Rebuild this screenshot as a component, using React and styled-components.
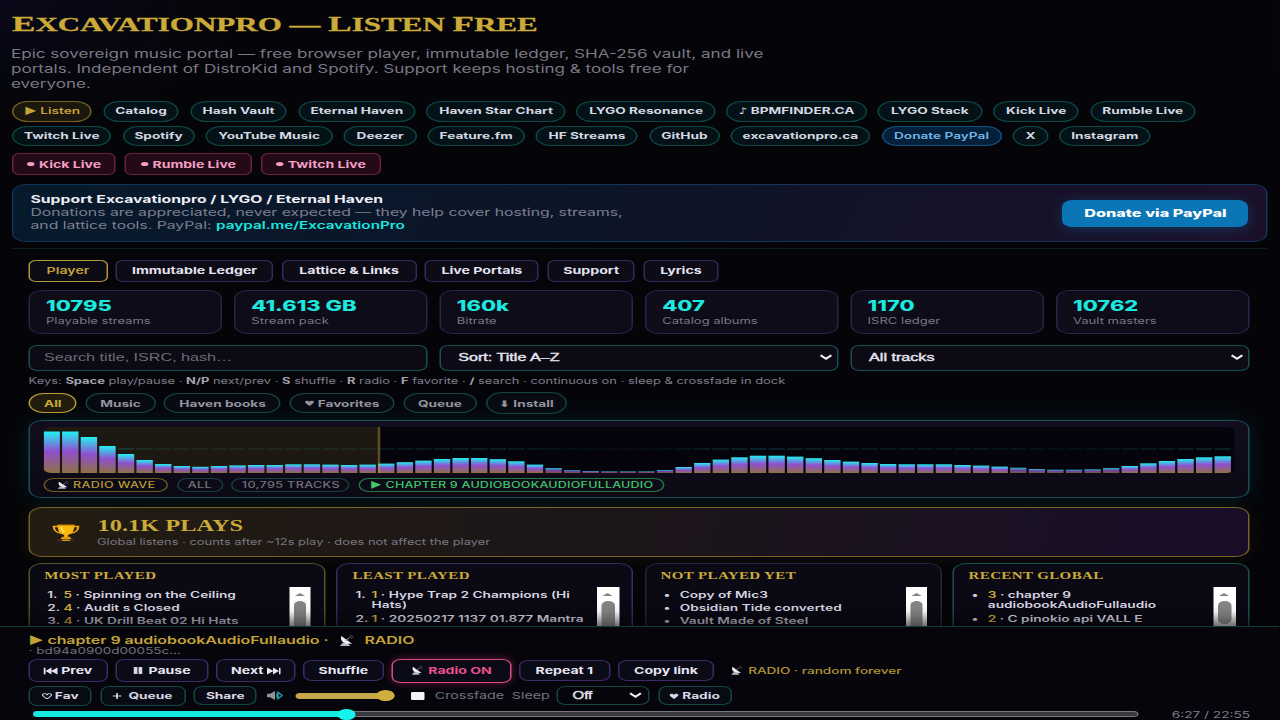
import React from "react";
import styled, { createGlobalStyle, css } from "styled-components";

// the portal is drawn in an extended (wide) face, everything is scaled by this
const WIDE = 1.5;
const w = (n) => `${n / WIDE}px`;

const nav = [
  [
    ["▶ Listen", 80, "gold"],
    ["Catalog", 76],
    ["Hash Vault", 97],
    ["Eternal Haven", 117.5],
    ["Haven Star Chart", 139],
    ["LYGO Resonance", 139],
    ["♪ BPMFINDER.CA", 140],
    ["LYGO Stack", 104.5],
    ["Kick Live", 86],
    ["Rumble Live", 105],
  ],
  [
    ["Twitch Live", 99.5],
    ["Spotify", 72],
    ["YouTube Music", 127],
    ["Deezer", 73],
    ["Feature.fm", 97],
    ["HF Streams", 102.5],
    ["GitHub", 70.5],
    ["excavationpro.ca", 139.5],
    ["Donate PayPal", 120.5, "blue"],
    ["X", 35.5],
    ["Instagram", 91],
  ],
];

const live = [
  ["Kick Live", 104],
  ["Rumble Live", 127],
  ["Twitch Live", 121],
];

const tabs = [
  ["Player", 79],
  ["Immutable Ledger", 157.5],
  ["Lattice & Links", 135],
  ["Live Portals", 114],
  ["Support", 88],
  ["Lyrics", 75],
];

const stats = [
  ["10795", "Playable streams"],
  ["41.613 GB", "Stream pack"],
  ["160k", "Bitrate"],
  ["407", "Catalog albums"],
  ["1170", "ISRC ledger"],
  ["10762", "Vault masters"],
];

const filters = [
  ["All", 48.5],
  ["Music", 69.5],
  ["Haven books", 117],
  ["Favorites", 104.5, "heart"],
  ["Queue", 73.5],
  ["⬇ Install", 81.5],
];

const wave = [
  41.5, 41.5, 36, 27, 19, 13, 9, 7, 6.2, 7, 7.6, 8, 8, 8.7, 8.7, 8.4, 8, 8.4,
  9.4, 10.8, 12.4, 14, 15, 15, 13.8, 11.7, 8.4, 5, 2.8, 2, 1.6, 1.6, 1.6, 3, 6,
  10, 13.4, 15.7, 17.3, 17.3, 16.4, 14.8, 13, 11.4, 10, 9, 8.7, 8.7, 8.7, 8,
  7.4, 6.4, 5.3, 4, 3.3, 3.3, 3.7, 5, 7, 9.7, 12, 14, 15.7, 16.7,
];

const boards = [
  {
    title: "Most played",
    edge: "#5b5223",
    items: [
      ["1.", "5", "Spinning on the Ceiling"],
      ["2.", "4", "Audit s Closed"],
      ["3.", "4", "UK Drill Beat 02 Hi Hats"],
    ],
  },
  {
    title: "Least played",
    edge: "#3d2a63",
    items: [
      ["1.", "1", "Hype Trap 2 Champions (Hi Hats)"],
      ["2.", "1", "20250217 1137 01.877 Mantra"],
    ],
  },
  {
    title: "Not played yet",
    edge: "#282439",
    items: [
      ["•", "", "Copy of Mic3"],
      ["•", "", "Obsidian Tide converted"],
      ["•", "", "Vault Made of Steel"],
    ],
  },
  {
    title: "Recent global",
    edge: "#17544a",
    short: true,
    items: [
      ["•", "3", "chapter 9 audiobookAudioFullaudio"],
      ["•", "2", "C pinokio api VALL E"],
    ],
  },
];

function Dish({ size = 12 }) {
  return (
    <Icon $w={size} $h={size * 0.75} viewBox="0 0 16 16" preserveAspectRatio="none">
      <path d="M1 15.500h11l-3-4.500H4z" fill="#b9bcc6" />
      <path d="M2.500 1.500C1 8 4 13.500 14 12.500z" fill="#eef0f5" />
      <path d="M7 8l4-4" stroke="#8c8f99" strokeWidth="1.200" />
      <path d="M11 2.500q2.500.5 2.500 3M11.500.500q4 .5 4 4" stroke="#5c5f55" fill="none" />
    </Icon>
  );
}

function Heart({ open }) {
  return (
    <Icon $w={10} $h={6.500} viewBox="0 0 12 10" preserveAspectRatio="none">
      <path
        d="M6 9.300L1.600 5C-.200 3.200 1 1 3.200 1 4.500 1 5.500 1.800 6 2.800 6.500 1.800 7.500 1 8.800 1 11 1 12.200 3.200 10.400 5z"
        fill={open ? "none" : "currentColor"}
        stroke="currentColor"
        strokeWidth={open ? 1.400 : 0}
      />
    </Icon>
  );
}

function Trophy() {
  return (
    <Icon $w={30} $h={19} viewBox="0 0 32 32" preserveAspectRatio="none">
      <path
        d="M8 6H3c0 7 2 10 8 11M24 6h5c0 7-2 10-8 11"
        fill="none"
        stroke="#f2a60d"
        strokeWidth="2.400"
      />
      <path d="M7 3h18c0 11-3 16-7 17v4h-4v-4C10 19 7 14 7 3z" fill="#fbb70f" />
      <path d="M7 3h18v2H7z" fill="#e08c08" />
      <path d="M11 6c0 5 1 8 3 10" stroke="#fde27a" strokeWidth="1.800" fill="none" />
      <path d="M12 23h8l2 4H10z" fill="#e8960a" />
      <path d="M7 27h18v4H7z" fill="#3d2a20" />
      <path d="M12 28h8v2h-8z" fill="#f2b21a" />
    </Icon>
  );
}

function Chevron() {
  return (
    <Icon $w={14} $h={7} viewBox="0 0 13 8" preserveAspectRatio="none">
      <path d="M1.500 1.500l5 4 5-4" fill="none" stroke="#f1f1f7" strokeWidth="2.200" />
    </Icon>
  );
}

function Skip({ back }) {
  const d = back
    ? "M0 1h2v8H0zM8 .500v9L2 5zM14 .500v9L7.500 5z"
    : "M0 .500v9l6.500-4.500zM6 .500v9l6-4.500zM12 1h2v8h-2z";
  return (
    <Icon $w={14} $h={8} viewBox="0 0 14 10" preserveAspectRatio="none">
      <path d={d} fill="#e7e5f2" />
    </Icon>
  );
}

function Wave() {
  const step = 18.6;
  return (
    <Canvas viewBox="0 0 1191 46" preserveAspectRatio="none">
      <defs>
        <linearGradient id="bar" x1="0" y1="0" x2="0" y2="1">
          <stop offset="0" stopColor="#22f0f2" />
          <stop offset="0.480" stopColor="#914fd0" />
          <stop offset="1" stopColor="#8f7145" />
        </linearGradient>
      </defs>
      <rect width="336" height="46" fill="#d4af37" opacity="0.120" />
      {wave.map((h, i) => (
        <g key={i}>
          {i > 3 && (
            <rect
              x={i * step}
              y="21.500"
              width="16.300"
              height="1"
              fill="#1a8a84"
              opacity={0.12 + h / 55}
            />
          )}
          <rect
            x={i * step}
            y={46 - h}
            width="16.400"
            height={h}
            fill="url(#bar)"
            opacity={h < 6 ? 0.8 : 1}
          />
        </g>
      ))}
      <rect x="334.500" width="2.500" height="46" fill="#d4af37" opacity="0.380" />
    </Canvas>
  );
}

export default function App() {
  return (
    <>
      <Reset />
      <Page>
        <Header>
          <Title>
            <big>E</big>xcavationpro — <big>L</big>isten <big>F</big>ree
          </Title>
          <Lead>
            Epic sovereign music portal — free browser player, immutable ledger,
            SHA-256 vault, and live
            <br />
            portals. Independent of DistroKid and Spotify. Support keeps hosting
            &amp; tools free for
            <br />
            everyone.
          </Lead>
          {nav.map((row, r) => (
            <NavRow key={r} $second={r === 1}>
              {row.map(([label, size, tone]) => (
                <Pill key={label} $w={size} $tone={tone}>
                  {label}
                </Pill>
              ))}
            </NavRow>
          ))}
          <LiveRow>
            {live.map(([label, size]) => (
              <LiveLink key={label} $w={size}>
                <i />
                {label}
              </LiveLink>
            ))}
          </LiveRow>
          <Donate>
            <div>
              <b>Support Excavationpro / LYGO / Eternal Haven</b>
              <br />
              Donations are appreciated, never expected — they help cover
              hosting, streams,
              <br />
              and lattice tools. PayPal: <a>paypal.me/ExcavationPro</a>
            </div>
            <DonateButton>Donate via PayPal</DonateButton>
          </Donate>
        </Header>

        <Main>
          <TabRow>
            {tabs.map(([label, size], i) => (
              <Tab key={label} $w={size} $on={i === 0}>
                {label}
              </Tab>
            ))}
          </TabRow>
          <Stats>
            {stats.map(([value, label]) => (
              <Stat key={label}>
                <b>{value}</b>
                <span>{label}</span>
              </Stat>
            ))}
          </Stats>
          <Fields>
            <Field $muted>Search title, ISRC, hash…</Field>
            <Field $select>
              Sort: Title A–Z <Chevron />
            </Field>
            <Field $select>
              All tracks <Chevron />
            </Field>
          </Fields>
          <Keys>
            Keys: <b>Space</b> play/pause · <b>N/P</b> next/prev · <b>S</b>{" "}
            shuffle · <b>R</b> radio · <b>F</b> favorite · <b>/</b> search ·
            continuous on · sleep &amp; crossfade in dock
          </Keys>
          <FilterRow>
            {filters.map(([label, size, icon], i) => (
              <Filter key={label} $w={size} $on={i === 0} $tall={i === 5}>
                {icon && <Heart />}
                {label}
              </Filter>
            ))}
          </FilterRow>
          <WavePanel>
            <WaveBox>
              <Wave />
            </WaveBox>
            <TagRow>
              <Tag $w={124} $c="#bb9b32" $b="#6b5a20">
                <Dish /> RADIO WAVE
              </Tag>
              <Tag $w={46.5}>ALL</Tag>
              <Tag $w={118.5}>10,795 TRACKS</Tag>
              <Tag $w={306} $c="#3fc86c" $b="#237a45" $tight>
                ▶ CHAPTER 9 AUDIOBOOKAUDIOFULLAUDIO
              </Tag>
            </TagRow>
          </WavePanel>
          <Plays>
            <Trophy />
            <div>
              <PlaysTitle>10.1K plays</PlaysTitle>
              <PlaysNote>
                Global listens · counts after ~12s play · does not affect the
                player
              </PlaysNote>
            </div>
          </Plays>
          <Boards>
            {boards.map((b) => (
              <Board key={b.title} $edge={b.edge}>
                <BoardTitle>{b.title}</BoardTitle>
                <BoardBody>
                  <List>
                    {b.items.map(([mark, n, text]) => (
                      <li key={text}>
                        <Mark>{mark}</Mark>
                        <span>
                          {n && <em>{n}</em>}
                          {n && " · "}
                          {text}
                        </span>
                      </li>
                    ))}
                  </List>
                  <Scroll $short={b.short}>
                    <svg viewBox="0 0 10 4" preserveAspectRatio="none">
                      <path d="M0 4L5 0l5 4z" fill="#858585" />
                    </svg>
                    <i />
                  </Scroll>
                </BoardBody>
              </Board>
            ))}
          </Boards>
        </Main>

        <Dock>
          <Now>
            ▶ chapter 9 audiobookAudioFullaudio · <Dish size={15} /> RADIO
          </Now>
          <Hash>· bd94a0900d00055c…</Hash>
          <Controls>
            <Ctl $w={79.5} $h={23}>
              <Skip back />
              Prev
            </Ctl>
            <Ctl $w={93} $h={23}>
              <Icon $w={9} $h={7} viewBox="0 0 8 8" preserveAspectRatio="none">
                <path d="M0 0h3.500v8H0zM4.500 0H8v8H4.500z" fill="#d9d7e6" />
              </Icon>
              &nbsp;Pause
            </Ctl>
            <Ctl $w={80} $h={23}>
              Next
              <Skip />
            </Ctl>
            <Ctl $w={80.5}>Shuffle</Ctl>
            <Ctl $w={120} $h={24} $hot>
              <Dish />
              Radio ON
            </Ctl>
            <Ctl $w={92}>Repeat 1</Ctl>
            <Ctl $w={96.5}>Copy link</Ctl>
            <RadioNote>
              <Dish />
              RADIO · random forever
            </RadioNote>
          </Controls>
          <Extras>
            <Small $w={63.5} $h={20.5}>
              <Heart open />
              Fav
            </Small>
            <Small $w={86} $h={20.5}>
              <Icon $w={9} $h={6} viewBox="0 0 9 9" preserveAspectRatio="none">
                <path d="M0 4.500h9M4.500 0v9" stroke="currentColor" strokeWidth="1.700" />
              </Icon>
              &nbsp;Queue
            </Small>
            <Small $w={63.5}>Share</Small>
            <Icon $w={17} $h={9} viewBox="0 0 17 10" preserveAspectRatio="none">
              <path d="M0 3h3l5-3v10L3 7H0z" fill="#8f939c" />
              <path d="M10 2.500v5M11 1.500l4 3.500-4 3.500z" stroke="#2b9aa8" strokeWidth="1.500" fill="none" />
            </Icon>
            <Volume>
              <i />
            </Volume>
            <Check />
            <Dim>Crossfade</Dim>
            <Dim>Sleep</Dim>
            <SleepSelect>
              Off <Chevron />
            </SleepSelect>
            <Small $w={73.5}>
              <Heart />
              Radio
            </Small>
          </Extras>
          <SeekRow>
            <Seek>
              <i />
            </Seek>
            <time>6:27 / 22:55</time>
          </SeekRow>
        </Dock>
      </Page>
    </>
  );
}

const Reset = createGlobalStyle`
  * {
    box-sizing: border-box;
  }
  html, body {
    margin: 0;
    height: 720px;
    overflow: hidden;
    background: #050509;
  }
`;

const Page = styled.div`
  display: flex;
  flex-direction: column;
  width: ${w(1280)};
  height: 720px;
  overflow: hidden;
  transform: scaleX(${WIDE});
  transform-origin: 0 0;
  font-family: Inter, "DejaVu Sans", sans-serif;
  color: #e4e2ee;
  white-space: nowrap;
  background: radial-gradient(
      ellipse 160px 120px at 0 0,
      #080819 0%,
      transparent 100%
    ),
    #050509;
`;

const Icon = styled.svg`
  flex: none;
  width: ${(p) => w(p.$w)};
  height: ${(p) => p.$h}px;
`;

const serif = css`
  font-family: "Liberation Serif", serif;
  font-weight: 700;
  color: #cbaa38;
  text-transform: uppercase;
  transform-origin: 0 50%;
`;

const Header = styled.header`
  flex: none;
  height: 249px;
  margin: 0 ${w(12)};
  border-bottom: 1px solid #0b1d1f;
`;

const Title = styled.h1`
  ${serif}
  width: fit-content;
  margin: 11px 0 0;
  height: 26px;
  line-height: 26px;
  font-size: 19px;
  transform: scaleX(1.088);
  -webkit-text-stroke: 0.3px;
  big {
    font-size: 21.5px;
  }
`;

const Lead = styled.p`
  margin: 10px 0 0 ${w(-1)};
  height: 44.5px;
  font-size: 11.37px;
  line-height: 14.8px;
  color: #7b7885;
`;

const NavRow = styled.nav`
  display: flex;
  gap: ${w(11.05)};
  height: ${(p) => (p.$second ? 19.5 : 20.5)}px;
  margin-top: ${(p) => (p.$second ? 4.5 : 9.5)}px;
`;

const tones = {
  gold: css`
    color: #c4a336;
    background: #1b170e;
    border-color: #75641f;
    font-weight: 600;
  `,
  blue: css`
    color: #74b5e6;
    background: #04203a;
    border-color: #125080;
    font-weight: 600;
  `,
};

const Pill = styled.a`
  display: flex;
  flex: none;
  align-items: center;
  justify-content: center;
  width: ${(p) => w(p.$w)};
  padding-bottom: 1px;
  border: 1px solid #0d4845;
  border-radius: 20px;
  background: #041217;
  color: #d6d7e2;
  font-size: 9.1px;
  font-weight: 700;
  ${(p) => tones[p.$tone]}
`;

const LiveRow = styled.div`
  display: flex;
  gap: ${w(8.7)};
  margin-top: 7.5px;
`;

const LiveLink = styled.a`
  display: flex;
  align-items: center;
  justify-content: center;
  gap: 3px;
  width: ${(p) => w(p.$w)};
  height: 22px;
  border: 1px solid #6b1f40;
  border-radius: 5px;
  background: #240a18;
  color: #f29fc2;
  font-size: 9.4px;
  font-weight: 700;
  i {
    width: 5px;
    height: 4px;
    border-radius: 50%;
    background: #f29fc2;
  }
`;

const Donate = styled.section`
  display: flex;
  align-items: center;
  justify-content: space-between;
  height: 58px;
  margin-top: 9px;
  padding: 1px ${w(18)} 0 ${w(17)};
  border: 1px solid #12355a;
  border-radius: 9px;
  background: linear-gradient(110deg, #061a2b 0%, #0d1428 50%, #1c1029 100%);
  font-size: 10.5px;
  line-height: 12.8px;
  color: #7d8090;
  b {
    color: #eeeef6;
  }
  a {
    color: #18e6df;
    font-size: 10.2px;
    font-weight: 600;
  }
`;

const DonateButton = styled.button`
  width: ${w(186)};
  height: 26.5px;
  padding: 0;
  border: 0;
  border-radius: 7px;
  background: #0a76b6;
  box-shadow: 0 2px 10px rgba(10, 118, 182, 0.35);
  color: #fff;
  font: 800 10.8px Inter, sans-serif;
`;

const Main = styled.main`
  flex: none;
  height: 378px;
  overflow: hidden;
  padding: 10.5px ${w(30.3)} 0 ${w(28.5)};
`;

const TabRow = styled.div`
  display: flex;
  gap: ${w(8.3)};
`;

const Tab = styled.div`
  display: flex;
  align-items: center;
  justify-content: center;
  width: ${(p) => w(p.$w)};
  height: 22.5px;
  border: 1px solid ${(p) => (p.$on ? "#b3963a" : "#38275a")};
  border-radius: 5px;
  background: #0c0b16;
  color: ${(p) => (p.$on ? "#c4a336" : "#e4e2ee")};
  font-size: 9.45px;
  font-weight: ${(p) => (p.$on ? 600 : 700)};
`;

const Stats = styled.div`
  display: grid;
  grid-template-columns: repeat(6, 1fr);
  gap: ${w(11.2)};
  margin-top: 7.5px;
`;

const Stat = styled.div`
  display: flex;
  flex-direction: column;
  height: 44px;
  padding: 7.2px 0 0 ${w(16)};
  border: 1px solid #2e2347;
  border-radius: 9px;
  background: #0d0c18;
  b {
    font-size: 14.6px;
    font-weight: 800;
    line-height: 17px;
    color: #1ce8df;
  }
  span {
    font-size: 8.7px;
    line-height: 12px;
    color: #797784;
  }
`;

const Fields = styled.div`
  display: grid;
  grid-template-columns: repeat(3, 1fr);
  gap: ${w(11.2)};
  margin-top: 11px;
`;

const Field = styled.div`
  display: flex;
  align-items: center;
  justify-content: space-between;
  height: 26px;
  padding: 0 ${(p) => (p.$select ? w(4) : 0)} 1px ${(p) => w(p.$select ? 17.5 : 14)};
  border: 1px solid #175050;
  border-radius: 6px;
  background: #0b0a15;
  color: ${(p) => (p.$muted ? "#6d6b76" : "#e4e2ee")};
  font: 10.75px "Liberation Sans", Arial, sans-serif;
  -webkit-text-stroke: ${(p) => (p.$muted ? 0 : 0.4)}px;
`;

const Keys = styled.p`
  margin: 4.5px 0 0;
  font-size: 8.62px;
  line-height: 13px;
  color: #7f7d89;
  b {
    color: #a5a3b0;
    font-weight: 700;
  }
`;

const FilterRow = styled.div`
  display: flex;
  align-items: center;
  gap: ${w(8.8)};
  height: 22px;
  margin-top: 4px;
`;

const Filter = styled.div`
  display: flex;
  flex: none;
  align-items: center;
  justify-content: center;
  gap: 2px;
  width: ${(p) => w(p.$w)};
  height: ${(p) => (p.$tall ? 21.5 : 19.5)}px;
  border: 1px solid ${(p) => (p.$on ? "#b99c37" : "#144546")};
  border-radius: 20px;
  background: ${(p) => (p.$on ? "#211c0e" : "#080a12")};
  color: ${(p) => (p.$on ? "#cbaa38" : "#96949f")};
  font-size: 9.1px;
  font-weight: 700;
`;

const WavePanel = styled.section`
  height: 77.5px;
  margin-top: 6px;
  padding: 6px ${w(14)} 0 ${w(14)};
  border: 1px solid #175055;
  border-radius: 9px;
  background: linear-gradient(180deg, #110d1e, #0b0a14);
  box-shadow: 0 0 20px rgba(0, 160, 180, 0.14);
`;

const WaveBox = styled.div`
  height: 46px;
  border-radius: 5px;
  overflow: hidden;
  background: #05040d;
`;

const Canvas = styled.svg`
  display: block;
  width: 100%;
  height: 46px;
`;

const TagRow = styled.div`
  display: flex;
  gap: ${w(8.6)};
  margin-top: 4.5px;
`;

const Tag = styled.span`
  display: flex;
  align-items: center;
  justify-content: center;
  gap: 3px;
  flex: none;
  width: ${(p) => w(p.$w)};
  height: 14px;
  padding-top: 1px;
  border: 1px solid ${(p) => p.$b || "#143f43"};
  border-radius: 10px;
  color: ${(p) => p.$c || "#74727f"};
  font-size: 8.4px;
  font-weight: 500;
  letter-spacing: ${(p) => (p.$tight ? 0.13 : 0.25)}px;
  svg {
    height: 8px;
  }
`;

const Plays = styled.section`
  display: flex;
  align-items: center;
  gap: ${w(16.5)};
  height: 50px;
  margin-top: 9px;
  padding: 1px 0 0 ${w(20.5)};
  border: 1px solid #756324;
  border-radius: 9px;
  background: linear-gradient(100deg, #221c12 0%, #1c1519 50%, #190d29 100%);
  box-shadow: 0 0 14px rgba(212, 175, 55, 0.08);
`;

const PlaysTitle = styled.div`
  ${serif}
  width: fit-content;
  margin-top: -1px;
  font-size: 17.5px;
  line-height: 20px;
  transform: scaleX(0.93);
`;

const PlaysNote = styled.div`
  margin-top: 1px;
  font-size: 8.6px;
  line-height: 13px;
  color: #7a7780;
`;

const Boards = styled.div`
  display: grid;
  grid-template-columns: repeat(4, 1fr);
  gap: ${w(11.2)};
  margin-top: 6px;
`;

const Board = styled.section`
  height: 140px;
  padding: 6.5px ${w(12.8)} 0 ${w(14.3)};
  border: 1px solid ${(p) => p.$edge};
  border-radius: 9px;
  background: #0a0914;
`;

const BoardTitle = styled.h3`
  ${serif}
  width: fit-content;
  margin: 0;
  font-size: 10px;
  line-height: 12.5px;
  letter-spacing: 0.25px;
`;

const BoardBody = styled.div`
  display: flex;
  justify-content: space-between;
  margin-top: 4px;
`;

const List = styled.ul`
  width: ${w(243)};
  margin: 3px 0 0;
  padding: 0;
  list-style: none;
  font-size: 9.15px;
  line-height: 10.9px;
  font-weight: 600;
  color: #d6d4e0;
  white-space: normal;
  li {
    display: flex;
    margin-bottom: 2.2px;
  }
  li:nth-child(3) {
    opacity: 0.85;
  }
  em {
    font-style: normal;
    color: #cbaa38;
  }
`;

const Mark = styled.span`
  flex: none;
  width: ${w(19.2)};
  padding-left: ${w(3)};
`;

const Scroll = styled.div`
  display: flex;
  flex: none;
  flex-direction: column;
  align-items: center;
  width: ${w(22)};
  height: 80px;
  padding-top: 6px;
  background: linear-gradient(180deg, #fff 0, #fff 25px, #b9b9b9 40px);
  svg {
    width: ${w(12)};
    height: 3.5px;
  }
  i {
    width: ${w(13)};
    height: ${(p) => (p.$short ? 23 : 60)}px;
    margin-top: 5px;
    border-radius: 5px;
    background: #858585;
  }
`;

const Dock = styled.footer`
  position: relative;
  flex: none;
  height: 94px;
  margin-top: -1px;
  padding: 7px ${w(30)} 0 ${w(28.5)};
  border-top: 1px solid #0e3b3b;
  background: #05050b;
  box-shadow: 0 -4px 14px rgba(0, 0, 0, 0.6);
`;

const Now = styled.div`
  display: flex;
  align-items: center;
  gap: 7px;
  height: 13px;
  font-size: 10.65px;
  font-weight: 600;
  letter-spacing: -0.04px;
  color: #c4a336;
`;

const Hash = styled.div`
  height: 9px;
  font-size: 9px;
  line-height: 8px;
  color: #74727f;
`;

const Controls = styled.div`
  display: flex;
  align-items: center;
  gap: ${w(7.4)};
  height: 24px;
  margin-top: 2.5px;
`;

const Ctl = styled.button`
  display: flex;
  flex: none;
  align-items: center;
  justify-content: center;
  gap: 2px;
  width: ${(p) => w(p.$w)};
  height: ${(p) => p.$h || 21.5}px;
  padding: 0;
  border: 1px solid #3d2a68;
  border-radius: 6px;
  background: #0b0a17;
  color: #e7e5f2;
  font: 700 9.4px Inter, sans-serif;
  ${(p) =>
    p.$hot &&
    css`
      gap: 4px;
      border-color: #d94a83;
      color: #e8518d;
      box-shadow: 0 0 8px rgba(255, 60, 140, 0.35);
    `}
`;

const RadioNote = styled.span`
  display: flex;
  align-items: center;
  gap: 4px;
  margin-left: ${w(8.5)};
  color: #b39634;
  font-size: 9.05px;
  font-weight: 500;
`;

const Extras = styled.div`
  display: flex;
  align-items: center;
  gap: ${w(7.8)};
  height: 20.5px;
  margin-top: 3px;
  > svg {
    margin: 0 ${w(3.2)} 0 ${w(2.5)};
  }
`;

const Small = styled.button`
  display: flex;
  flex: none;
  align-items: center;
  justify-content: center;
  gap: 2px;
  width: ${(p) => w(p.$w)};
  height: ${(p) => p.$h || 19}px;
  padding: 0;
  border: 1px solid #124746;
  border-radius: 6px;
  background: #080b14;
  color: #d9d7e4;
  font: 700 9.15px Inter, "DejaVu Sans", sans-serif;
`;

const Volume = styled.div`
  display: flex;
  align-items: center;
  justify-content: flex-end;
  width: ${w(99)};
  height: 5.5px;
  border-radius: 3px;
  background: #c4a647;
  i {
    width: ${w(17.5)};
    height: 11px;
    border-radius: 50%;
    background: #d0af40;
  }
`;

const Check = styled.span`
  width: ${w(14.5)};
  height: 8.5px;
  margin: 0 ${w(2)} 0 ${w(8.5)};
  border-radius: 1px;
  background: #f4f4f4;
`;

const Dim = styled.span`
  font-size: 9.5px;
  color: #74727f;
`;

const SleepSelect = styled.div`
  display: flex;
  align-items: center;
  justify-content: space-between;
  width: ${w(93)};
  height: 19px;
  margin: 0 ${w(1)} 0 ${w(-1.5)};
  padding: 0 ${w(5)} 0 ${w(15)};
  border: 1px solid #124746;
  border-radius: 6px;
  font: 10px "Liberation Sans", Arial, sans-serif;
  -webkit-text-stroke: 0.35px;
`;

const SeekRow = styled.div`
  display: flex;
  align-items: center;
  justify-content: space-between;
  height: 11px;
  margin-top: 2.5px;
  padding-left: ${w(4.5)};
  time {
    font-size: 9.1px;
    color: #7f7d89;
  }
`;

const Seek = styled.div`
  display: flex;
  align-items: center;
  width: ${w(1105)};
  height: 6px;
  border: 1px solid #77767c;
  border-radius: 3px;
  background: #3a393f;
  &::before {
    content: "";
    width: ${w(314)};
    height: 6px;
    margin: 0 ${w(-9)} 0 -1px;
    border-radius: 3px;
    background: #16e8e2;
  }
  i {
    width: ${w(17)};
    height: 11px;
    border-radius: 50%;
    background: #16f2ec;
  }
`;
